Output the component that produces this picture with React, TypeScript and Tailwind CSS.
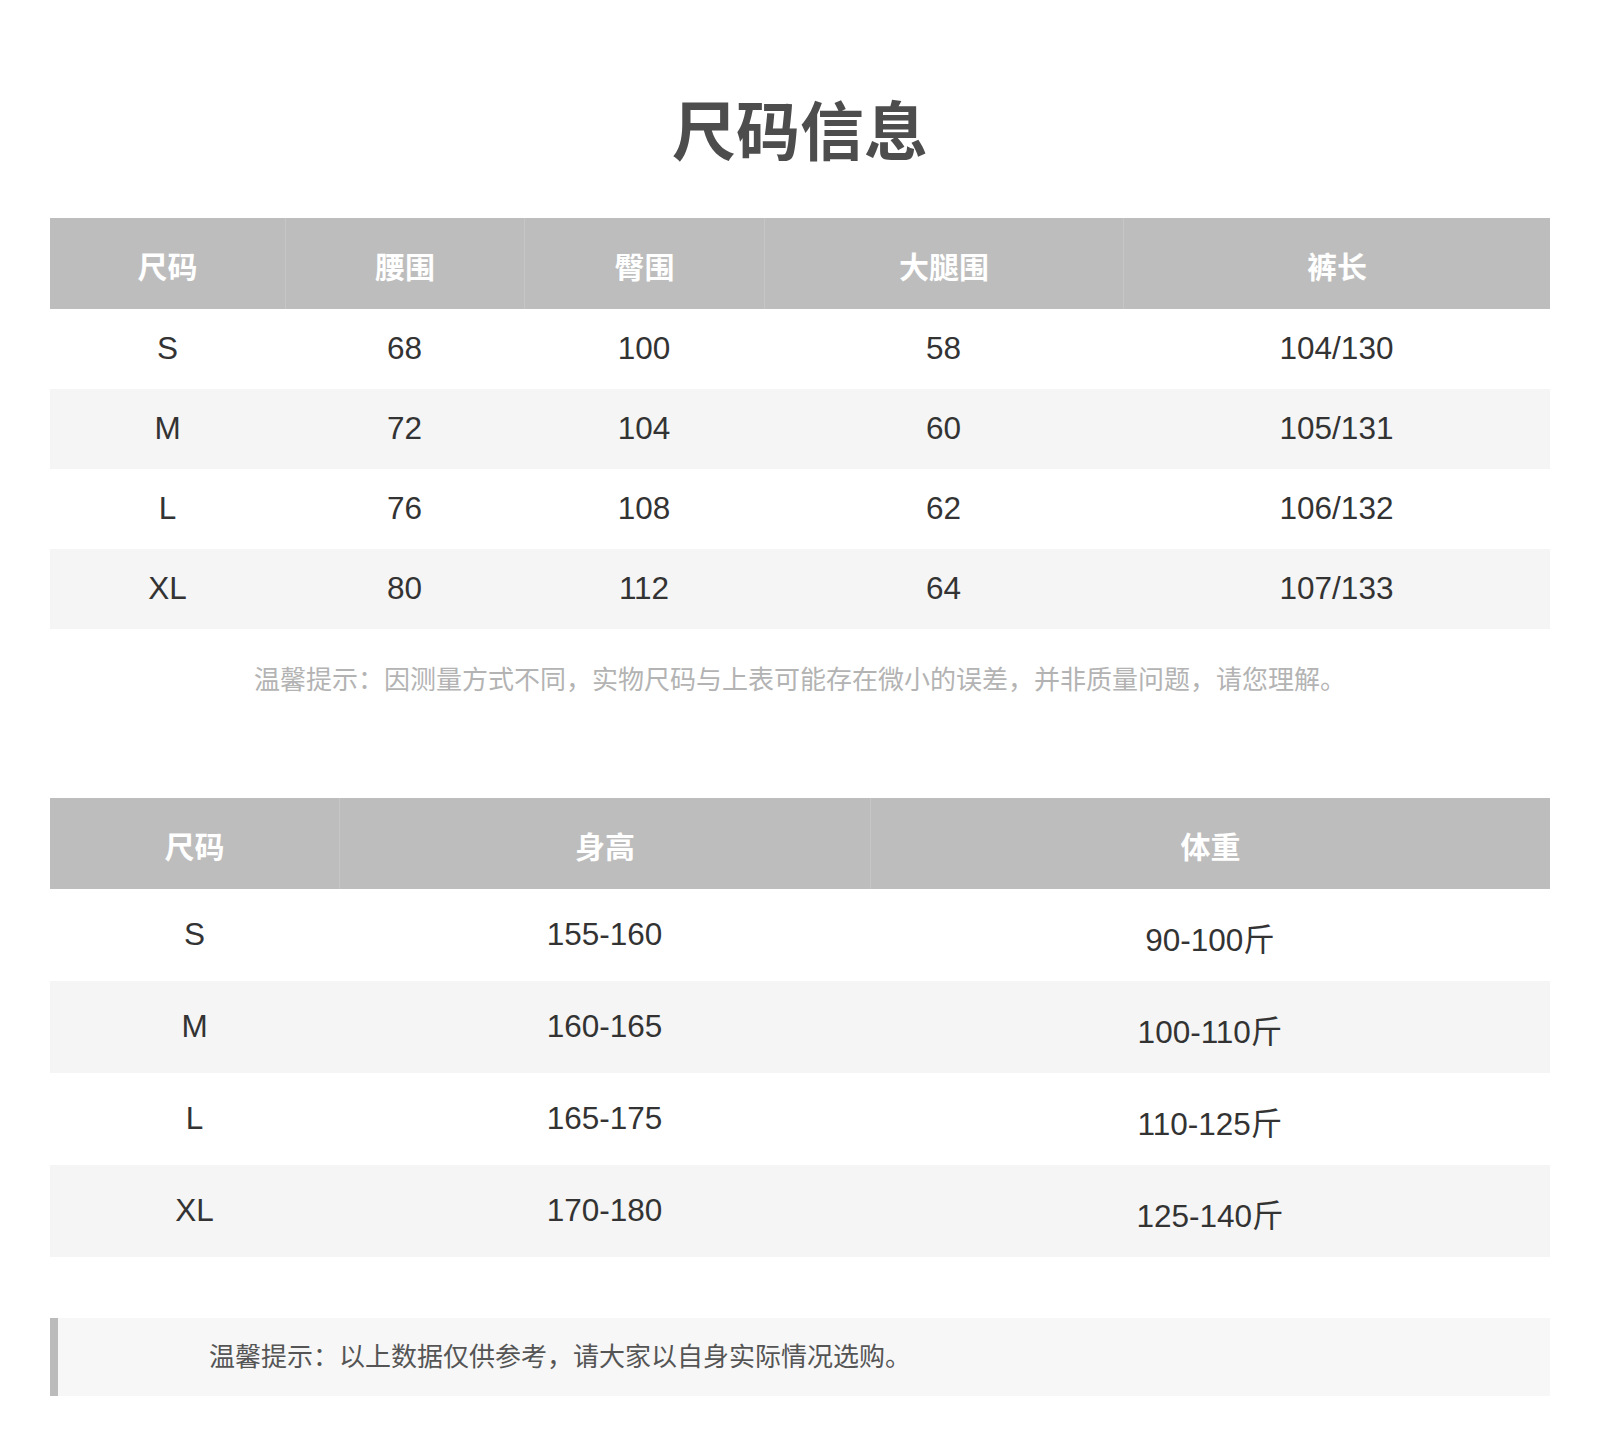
const font = "font-['Liberation_Sans','Noto_Sans_CJK_SC',sans-serif]";

const pantsCols = ["尺码", "腰围", "臀围", "大腿围", "裤长"];
const pantsRows = [
    ["S", "68", "100", "58", "104/130"],
    ["M", "72", "104", "60", "105/131"],
    ["L", "76", "108", "62", "106/132"],
    ["XL", "80", "112", "64", "107/133"],
];

const bodyCols = ["尺码", "身高", "体重"];
const bodyRows = [
    ["S", "155-160", "90-100斤"],
    ["M", "160-165", "100-110斤"],
    ["L", "165-175", "110-125斤"],
    ["XL", "170-180", "125-140斤"],
];

export default function App() {
    return (
        <main className={`min-h-[1436px] bg-white ${font}`}>
            <div className="w-[1500px] mx-auto pt-[101px] pb-[40px]">
                <h1 className="text-center text-[64px] leading-none font-bold text-[#4d4d4d]">
                    尺码信息
                </h1>

                {/* pants measurements */}
                <div className="mt-[53px]">
                    <div className="grid grid-cols-[235px_239px_240px_359px_427px] h-[91px] bg-[#bdbdbd]">
                        {pantsCols.map((c, i) => (
                            <div
                                key={c}
                                className={`flex items-center justify-center pt-2 text-[30px] font-bold text-white ${
                                    i > 0 ? "border-l border-[#c6c6c6]" : ""
                                }`}
                            >
                                {c}
                            </div>
                        ))}
                    </div>
                    {pantsRows.map((row, r) => (
                        <div
                            key={row[0]}
                            className={`grid grid-cols-[235px_239px_240px_359px_427px] h-20 ${
                                r % 2 === 1 ? "bg-[#f5f5f5]" : "bg-white"
                            }`}
                        >
                            {row.map((v, i) => (
                                <div
                                    key={i}
                                    className="flex items-center justify-center text-[31.5px] text-[#333]"
                                >
                                    {v}
                                </div>
                            ))}
                        </div>
                    ))}
                </div>

                <p className="mt-[38px] text-center text-[26px] leading-[26px] text-[#b3b3b3]">
                    温馨提示：因测量方式不同，实物尺码与上表可能存在微小的误差，并非质量问题，请您理解。
                </p>

                {/* height / weight */}
                <div className="mt-[105px]">
                    <div className="grid grid-cols-[289px_531px_680px] h-[91px] bg-[#bdbdbd]">
                        {bodyCols.map((c, i) => (
                            <div
                                key={c}
                                className={`flex items-center justify-center pt-2 text-[30px] font-bold text-white ${
                                    i > 0 ? "border-l border-[#c6c6c6]" : ""
                                }`}
                            >
                                {c}
                            </div>
                        ))}
                    </div>
                    {bodyRows.map((row, r) => (
                        <div
                            key={row[0]}
                            className={`grid grid-cols-[289px_531px_680px] h-[92px] ${
                                r % 2 === 1 ? "bg-[#f5f5f5]" : "bg-white"
                            }`}
                        >
                            {row.map((v, i) => (
                                <div
                                    key={i}
                                    className={`flex items-center justify-center text-[31.5px] text-[#333] ${
                                        i === 2 ? "pt-3" : ""
                                    }`}
                                >
                                    {v}
                                </div>
                            ))}
                        </div>
                    ))}
                </div>

                <div className="mt-[61px] h-[78px] flex items-center bg-[#f7f7f7] border-l-8 border-[#bbbbbb] pl-[151px]">
                    <p className="text-[26px] text-[#555]">
                        温馨提示：以上数据仅供参考，请大家以自身实际情况选购。
                    </p>
                </div>
            </div>
        </main>
    );
}
